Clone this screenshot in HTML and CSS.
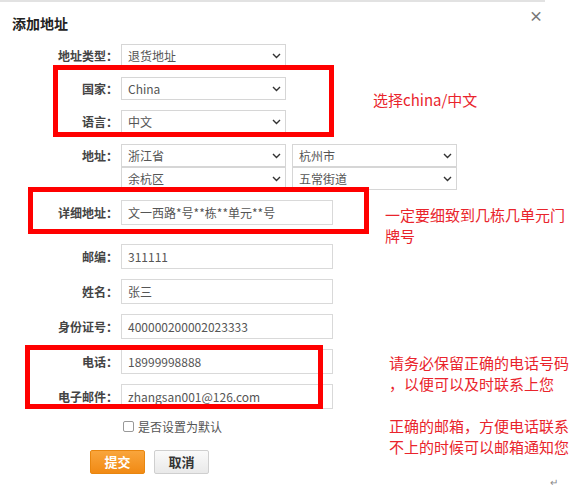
FILE: index.html
```html
<!DOCTYPE html>
<html lang="zh-CN">
<head>
<meta charset="utf-8">
<title>添加地址</title>
<link rel="stylesheet" href="styles.css">
</head>
<body>
<div class="dialog">
  <div class="topline"></div>
  <div class="header">
    <h1 class="title">添加地址</h1>
    <span class="close">×</span>
  </div>
  <div class="form">
    <div class="row first">
      <label class="label">地址类型：</label>
      <div class="select"><span>退货地址</span><svg class="chev" width="9" height="6" viewBox="0 0 9 6"><path d="M1 1l3.5 3.5L8 1" fill="none" stroke="#333" stroke-width="1.4"/></svg></div>
    </div>
    <div class="row">
      <label class="label">国家：</label>
      <div class="select"><span>China</span><svg class="chev" width="9" height="6" viewBox="0 0 9 6"><path d="M1 1l3.5 3.5L8 1" fill="none" stroke="#333" stroke-width="1.4"/></svg></div>
    </div>
    <div class="row">
      <label class="label">语言：</label>
      <div class="select"><span>中文</span><svg class="chev" width="9" height="6" viewBox="0 0 9 6"><path d="M1 1l3.5 3.5L8 1" fill="none" stroke="#333" stroke-width="1.4"/></svg></div>
    </div>
    <div class="row top">
      <label class="label">地址：</label>
      <div class="addr">
        <div class="select"><span>浙江省</span><svg class="chev" width="9" height="6" viewBox="0 0 9 6"><path d="M1 1l3.5 3.5L8 1" fill="none" stroke="#333" stroke-width="1.4"/></svg></div>
        <div class="select"><span>杭州市</span><svg class="chev" width="9" height="6" viewBox="0 0 9 6"><path d="M1 1l3.5 3.5L8 1" fill="none" stroke="#333" stroke-width="1.4"/></svg></div>
        <div class="select"><span>余杭区</span><svg class="chev" width="9" height="6" viewBox="0 0 9 6"><path d="M1 1l3.5 3.5L8 1" fill="none" stroke="#333" stroke-width="1.4"/></svg></div>
        <div class="select"><span>五常街道</span><svg class="chev" width="9" height="6" viewBox="0 0 9 6"><path d="M1 1l3.5 3.5L8 1" fill="none" stroke="#333" stroke-width="1.4"/></svg></div>
      </div>
    </div>
    <div class="row">
      <label class="label">详细地址：</label>
      <div class="input">文一西路*号**栋**单元**号</div>
    </div>
    <div class="row big">
      <label class="label">邮编：</label>
      <div class="input">311111</div>
    </div>
    <div class="row">
      <label class="label">姓名：</label>
      <div class="input">张三</div>
    </div>
    <div class="row">
      <label class="label">身份证号：</label>
      <div class="input">400000200002023333</div>
    </div>
    <div class="row">
      <label class="label">电话：</label>
      <div class="input">18999998888</div>
    </div>
    <div class="row">
      <label class="label">电子邮件：</label>
      <div class="input">zhangsan001@126.com</div>
    </div>
    <div class="check-row">
      <span class="checkbox"></span><span class="check-text">是否设置为默认</span>
    </div>
    <div class="buttons">
      <button class="btn btn-primary">提交</button>
      <button class="btn btn-default">取消</button>
    </div>
  </div>

  <div class="mark mark-1"></div>
  <div class="mark mark-2"></div>
  <div class="mark mark-3"></div>

  <div class="note note-1">选择china/中文</div>
  <div class="note note-2">一定要细致到几栋几单元门<br>牌号</div>
  <div class="note note-3">请务必保留正确的电话号码<br>，以便可以及时联系上您<br>&nbsp;<br>正确的邮箱，方便电话联系<br>不上的时候可以邮箱通知您</div>
  <span class="ret">↵</span>
</div>
</body>
</html>
```
FILE: styles.css
```css
html, body {
  margin: 0;
  padding: 0;
  background: #fff;
}
body {
  font-family: "Noto Sans CJK SC", "Noto Sans", sans-serif;
  width: 585px;
  height: 500px;
  overflow: hidden;
}
.dialog {
  position: relative;
  width: 585px;
  height: 500px;
}
.topline {
  width: 545px;
  height: 2px;
  background: #e2e2e2;
}
.header {
  position: relative;
  height: 42px;
  width: 545px;
}
.title {
  margin: 0;
  padding: 10px 0 0 12px;
  font-size: 14px;
  line-height: 22px;
  font-weight: 700;
  color: #222;
}
.close {
  position: absolute;
  left: 529px;
  top: 3px;
  font-size: 14px;
  line-height: 20px;
  font-weight: 700;
  color: #777;
}
.row {
  display: flex;
  align-items: center;
  margin-top: 10px;
}
.row.first { margin-top: 0; }
.row.big { margin-top: 19px; }
.row.top { align-items: flex-start; margin-top: 11px; }
.row.top .label { line-height: 23px; }
.label {
  width: 121px;
  padding-right: 3px;
  box-sizing: border-box;
  text-align: right;
  font-size: 12px;
  font-weight: 700;
  color: #444;
  white-space: nowrap;
}
.select {
  box-sizing: border-box;
  width: 165px;
  height: 23px;
  border: 1px solid #d6d6d6;
  display: flex;
  align-items: center;
  justify-content: space-between;
  padding: 0 4px 0 6px;
  font-size: 12px;
  color: #555;
  background: #fff;
}
.chev { display: block; }
.addr {
  display: grid;
  grid-template-columns: 165px 165px;
  column-gap: 6px;
}
.input {
  box-sizing: border-box;
  width: 212px;
  height: 25px;
  border: 1px solid #d9d9d9;
  padding: 0 6px;
  font-size: 12px;
  line-height: 23px;
  color: #555;
}
.check-row {
  display: flex;
  align-items: center;
  margin: 9px 0 0 123px;
  height: 16px;
}
.checkbox {
  box-sizing: border-box;
  width: 11px;
  height: 11px;
  border: 1px solid #999;
  border-radius: 2px;
  background: #fff;
}
.check-text {
  margin-left: 4px;
  font-size: 12px;
  color: #555;
}
.buttons {
  display: flex;
  gap: 9px;
  margin: 16px 0 0 90px;
}
.btn {
  box-sizing: border-box;
  width: 55px;
  height: 24px;
  padding: 0;
  font-family: "Noto Sans CJK SC", sans-serif;
  font-size: 13px;
  font-weight: 700;
  border-radius: 2px;
  line-height: 22px;
}
.btn-primary {
  background: linear-gradient(#f9a53c, #f18a14);
  border: 1px solid #e8860f;
  color: #fff;
}
.btn-default {
  background: linear-gradient(#fafafa, #e9e9e9);
  border: 1px solid #cfcfcf;
  color: #333;
}
.mark {
  position: absolute;
  box-sizing: border-box;
  border: 5px solid #f00;
}
.mark-1 { left: 53px; top: 65px; width: 281px; height: 72px; }
.mark-2 { left: 28px; top: 187px; width: 341px; height: 47px; }
.mark-3 { left: 25px; top: 345px; width: 298px; height: 64px; }
.note {
  position: absolute;
  font-size: 15px;
  line-height: 21px;
  color: #e9242c;
  white-space: nowrap;
}
.note-1 { left: 373px; top: 89px; }
.note-2 { left: 385px; top: 204px; line-height: 21px; }
.note-3 { left: 389px; top: 352px; }
.ret {
  position: absolute;
  left: 550px;
  top: 474px;
  font-size: 10px;
  color: #888;
}
```
